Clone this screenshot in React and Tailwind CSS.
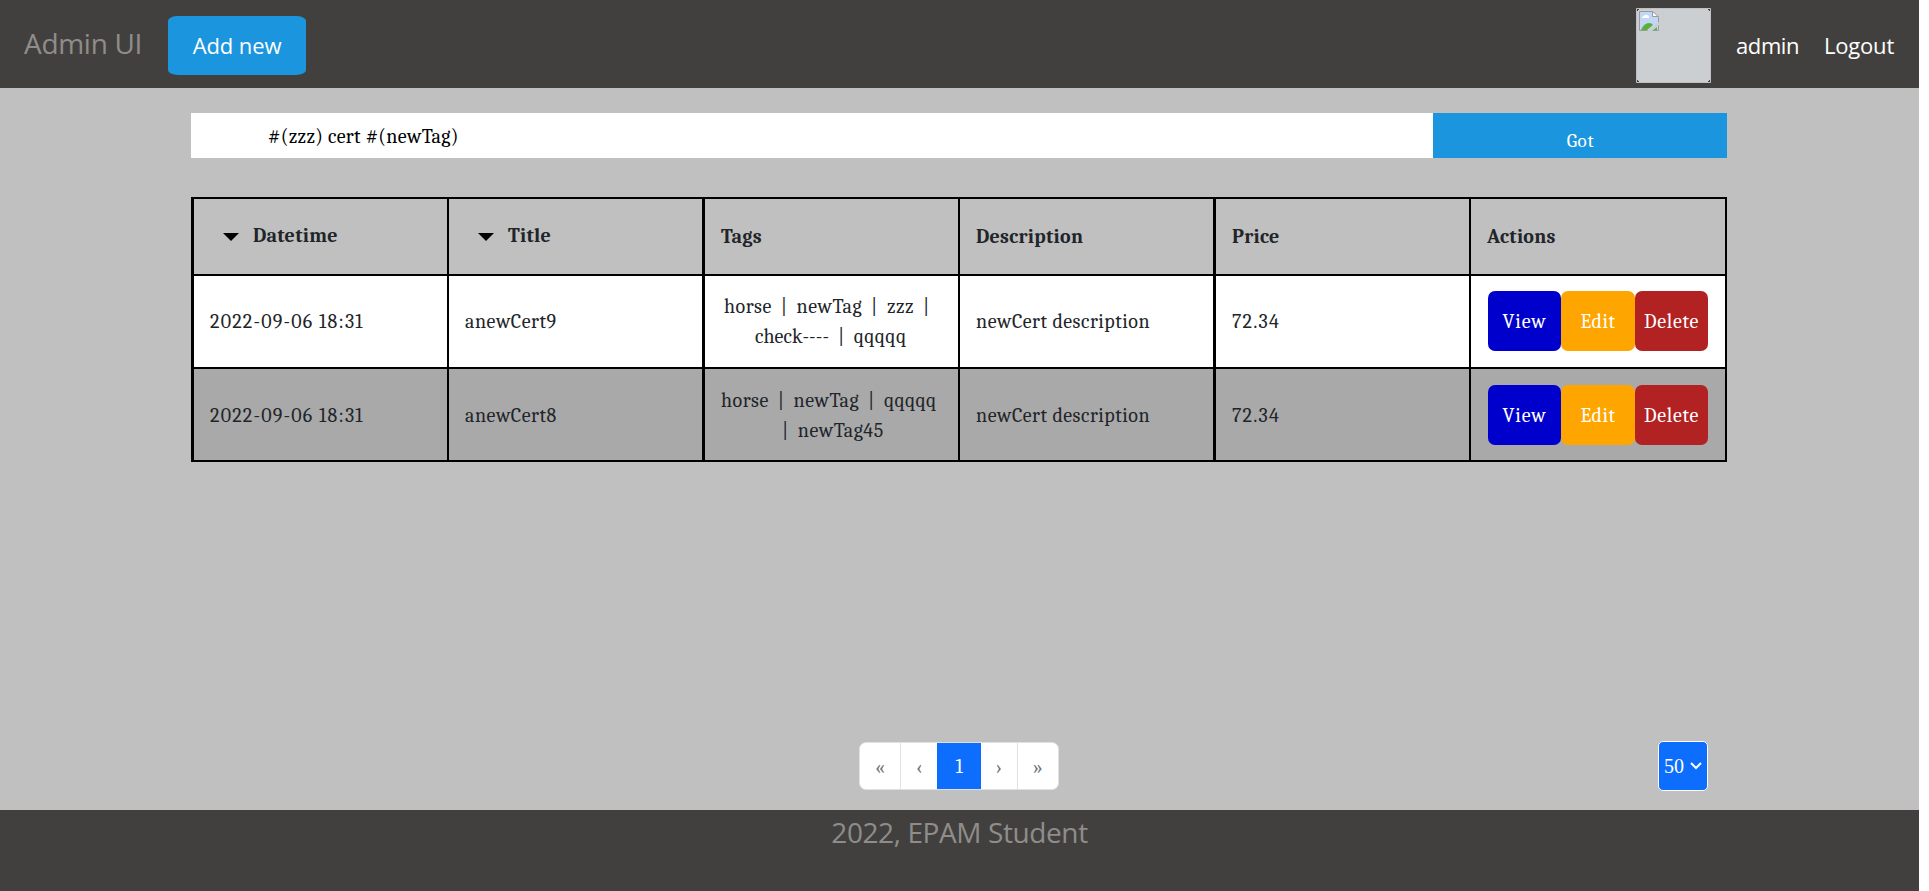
const rows = [
  {
    id: 9,
    date: "2022-09-06 18:31",
    title: "anewCert9",
    bg: "bg-white",
    textShift: "pt-px",
    shift: "pb-px",
    tags: [["horse", "|", "newTag", "|", "zzz", "|"], ["check----", "|", "qqqqq"]],
    indents: ["pl-[3px]", "pl-[34px]"],
  },
  {
    id: 8,
    date: "2022-09-06 18:31",
    title: "anewCert8",
    bg: "bg-[#a9a9a9]",
    textShift: "pt-[3px]",
    shift: "pt-px",
    tags: [["horse", "|", "newTag", "|", "qqqqq"], ["|", "newTag45"]],
    indents: ["pl-0", "pl-[62px]"],
  },
];

const serif = "font-['Cambria','Liberation_Serif',serif]";
const cell = "flex items-center border-b-2 border-black whitespace-nowrap";
const thin = "border-r-2";
const thick = "border-r-3";
const action = "flex h-[60px] items-center justify-center rounded-[7px] pt-[2px] text-white";

function Caret() {
  return (
    <svg className="h-[8px] w-[16px]" viewBox="0 0 16 8">
      <path d="M0 0h16L8 8z" fill="#000" />
    </svg>
  );
}

function SortHeader({ children, border }) {
  return (
    <div className={`${cell} ${border} pl-[29px]`}>
      <div className="flex items-center gap-[14px]">
        <Caret />
        <span className="pb-px">{children}</span>
      </div>
    </div>
  );
}

function TagLine({ items, indent }) {
  return (
    <div className={`flex h-[30px] items-center ${indent}`}>
      {items.map((t, i) =>
        t === "|" ? (
          <span key={i} className={`flex w-[24.8px] justify-center ${i === 0 ? "-ml-[10px]" : ""}`}>|</span>
        ) : (
          <span key={i} className={t.includes("--") ? "tracking-[0.05px]" : ""}>{t}</span>
        )
      )}
    </div>
  );
}

function BrokenImage() {
  return (
    <svg className="h-[75px] w-[75px]" viewBox="0 0 75 75">
      <path d="M.5.5h74v74H.5z" fill="#cbcfd2" stroke="#c0c0c0" />
      <path d="M1 1h2v1H2v1H1zM74 1h-2v1h1v1h1zM1 74h2v-1H2v-1H1zM74 74h-2v-1h1v-1h1z" fill="#42403e" />
      <g transform="translate(3 3)">
        <path d="M.5.5h13l6 6v13H.5z" fill="#c3d6f6" stroke="#9a9a9a" />
        <path d="M3 7q0-2 2-2 1-2 3-1 2 0 2 3z" fill="#fff" />
        <path d="M2 19q3-7 8-7 3 0 4 2l-6 5z" fill="#5cb03a" />
        <path d="M14 19l4-3v3z" fill="#5cb03a" />
        <path d="M8 20l12-9v3l-7 6z" fill="#cbcfd2" />
        <path d="M13.5.5v5h6z" fill="#fff" stroke="#9a9a9a" />
      </g>
    </svg>
  );
}

export default function App() {
  return (
    <div className="h-[891px] w-full overflow-hidden bg-white">
      <div className={`flex h-[891px] w-[1919px] flex-col bg-[#c0c0c0] text-[20px] text-[#212529] ${serif}`}>
        <header className="flex h-[88px] shrink-0 items-center bg-[#42403e] pr-[25px] pl-[24px] font-['Open_Sans',sans-serif] text-[22px] text-white">
          <div className="w-[144px] pb-[2px] text-[28px] leading-[40px] tracking-[-0.3px] text-[#8f8d8b]">Admin UI</div>
          <div className="mt-[3px] flex h-[59px] w-[138px] items-center justify-center rounded-[10px/5px] bg-[#1b95dd] pb-px tracking-[-0.1px]">Add new</div>
          <div className="ml-auto flex items-center">
            <div className="mt-[3px]"><BrokenImage /></div>
            <span className="ml-[25px] w-[88px] pt-[2px] tracking-[-0.4px]">admin</span>
            <span className="w-[70px] pt-[2px] tracking-[-0.2px]">Logout</span>
          </div>
        </header>

        <main className="ml-[191px] flex w-[1536px] grow flex-col pt-[25px]">
          <div className="flex h-[45px]">
            <div className="flex w-[1242px] items-center bg-white pt-[2px] pl-[77px] tracking-[0.32px] text-black">#(zzz) cert #(newTag)</div>
            <div className="flex w-[294px] items-center justify-center bg-[#1b95dd] pt-[12px] pl-px text-[19px] tracking-[0.7px] text-white">Got</div>
          </div>

          <div className="mt-[39px] grid grid-cols-[255px_256px_255px_256px_255px_256px] grid-rows-[77px_93px_93px] border-t-2 border-l-3 border-black tracking-[0.5px]">
            <div className="contents font-bold tracking-[0.27px]">
              <SortHeader border={thin}>Datetime</SortHeader>
              <SortHeader border={thick}>Title</SortHeader>
              <div className={`${cell} ${thin} pl-4`}>Tags</div>
              <div className={`${cell} ${thick} pl-4`}>Description</div>
              <div className={`${cell} ${thin} pl-4`}>Price</div>
              <div className={`${cell} ${thin} pl-4`}>Actions</div>
            </div>
            {rows.map((r) => (
              <div key={r.id} className="contents">
                <div className={`${cell} ${thin} ${r.bg} ${r.textShift} pl-4 tracking-[1.2px]`}>{r.date}</div>
                <div className={`${cell} ${thick} ${r.bg} ${r.textShift} pl-4`}>{r.title}</div>
                <div className={`${cell} ${thin} ${r.bg} ${r.textShift} pl-4`}>
                  <div>
                    {r.tags.map((line, i) => (
                      <TagLine key={i} items={line} indent={r.indents[i]} />
                    ))}
                  </div>
                </div>
                <div className={`${cell} ${thick} ${r.bg} ${r.textShift} pl-4`}>newCert description</div>
                <div className={`${cell} ${thin} ${r.bg} ${r.textShift} pl-4 tracking-[1.2px]`}>72.34</div>
                <div className={`${cell} ${thin} ${r.bg} ${r.shift} pl-[17px]`}>
                  <div className={`${action} w-[73px] bg-[#0000cd] tracking-[0.8px]`}>View</div>
                  <div className={`${action} w-[74px] bg-[#ffa500] tracking-[0.5px]`}>Edit</div>
                  <div className={`${action} w-[73px] bg-[#b22222] tracking-[0.7px]`}>Delete</div>
                </div>
              </div>
            ))}
          </div>

          <div className="mt-auto mb-[19px] grid grid-cols-[1fr_200px_1fr] items-center">
            <div />
            <div className="flex h-[48px] overflow-hidden rounded-[7px] border border-[#dee2e6] bg-white text-[#6c757d]">
              <div className="flex w-[41px] items-center justify-center border-r border-[#dee2e6] pt-[3px]">«</div>
              <div className="flex w-[36px] items-center justify-center pt-[3px]">‹</div>
              <div className="-my-px flex w-[44px] items-center justify-center bg-[#0d6efd] pt-[2px] text-white">1</div>
              <div className="flex w-[37px] items-center justify-center border-r border-[#dee2e6] pt-[3px]">›</div>
              <div className="flex w-[40px] items-center justify-center pt-[3px]">»</div>
            </div>
            <div className="mr-[19px] flex h-[50px] w-[50px] items-center justify-between justify-self-end rounded-[5px] border border-white bg-[#0d6efd] pr-[5px] pl-[5px] font-['Liberation_Serif',serif] text-white">
              <span>50</span>
              <svg className="h-[8px] w-[12px]" viewBox="0 0 12 8" fill="none" stroke="#fff" strokeWidth="2">
                <path d="M1 1l5 5 5-5" />
              </svg>
            </div>
          </div>
        </main>

        <footer className="h-[81px] shrink-0 bg-[#42403e] pt-px text-center font-['Open_Sans',sans-serif] text-[28px] leading-[42px] tracking-[-0.4px] text-[#8f8d8b]">
          2022, EPAM Student
        </footer>
      </div>
    </div>
  );
}
